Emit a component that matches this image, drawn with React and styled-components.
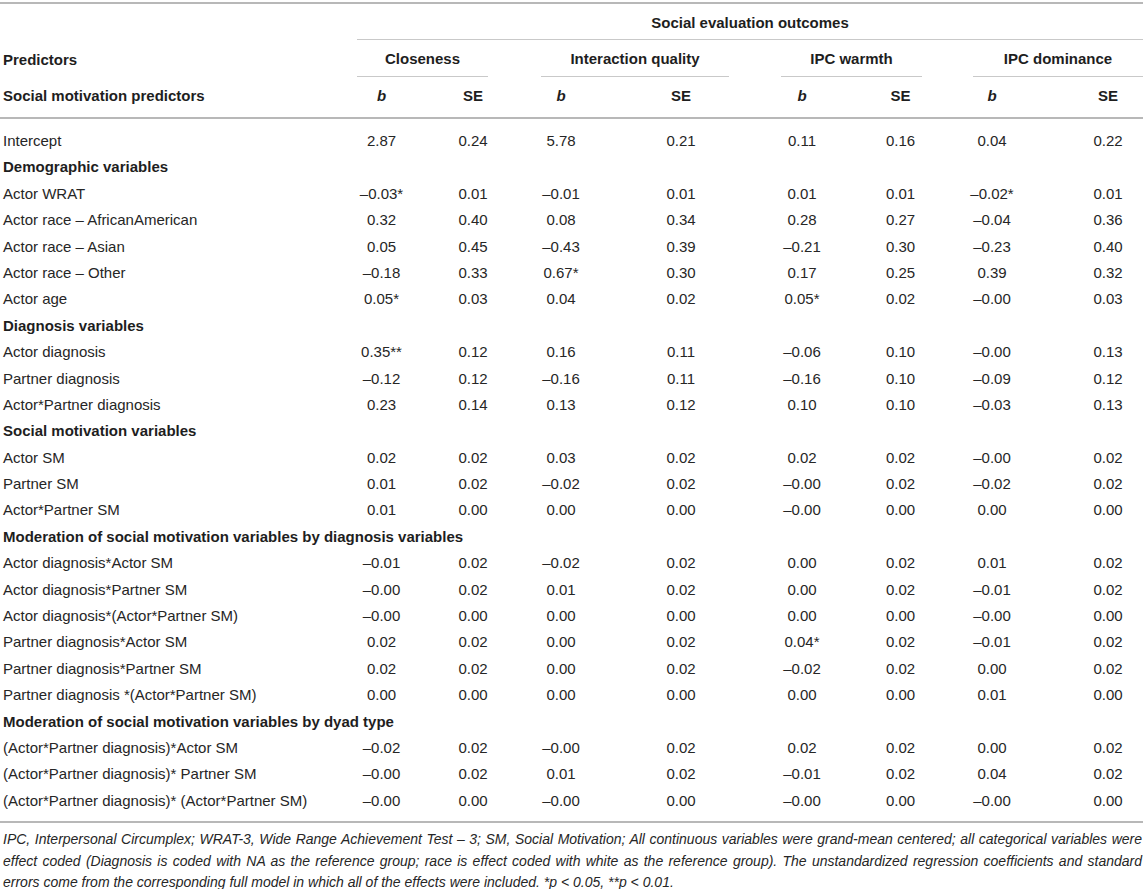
import React from "react";
import styled, { createGlobalStyle } from "styled-components";

const TRACKS =
  "357px 49px 52px 30px 53px 40px 52px 96px 52px 42px 56px 43px 51px 38px 62px 70px";

// grid lines for each outcome group (b column, SE column, line span)
const GROUPS = [
  { name: "Closeness", b: 2, se: 4, span: "2 / 5" },
  { name: "Interaction quality", b: 6, se: 8, span: "6 / 9" },
  { name: "IPC warmth", b: 10, se: 12, span: "10 / 13" },
  { name: "IPC dominance", b: 14, se: 16, span: "14 / 17" },
];

const D = "\u2013";

const BODY = [
  { label: "Intercept", v: ["2.87", "0.24", "5.78", "0.21", "0.11", "0.16", "0.04", "0.22"] },
  { section: "Demographic variables" },
  { label: "Actor WRAT", v: [D + "0.03*", "0.01", D + "0.01", "0.01", "0.01", "0.01", D + "0.02*", "0.01"] },
  { label: "Actor race " + D + " AfricanAmerican", v: ["0.32", "0.40", "0.08", "0.34", "0.28", "0.27", D + "0.04", "0.36"] },
  { label: "Actor race " + D + " Asian", v: ["0.05", "0.45", D + "0.43", "0.39", D + "0.21", "0.30", D + "0.23", "0.40"] },
  { label: "Actor race " + D + " Other", v: [D + "0.18", "0.33", "0.67*", "0.30", "0.17", "0.25", "0.39", "0.32"] },
  { label: "Actor age", v: ["0.05*", "0.03", "0.04", "0.02", "0.05*", "0.02", D + "0.00", "0.03"] },
  { section: "Diagnosis variables" },
  { label: "Actor diagnosis", v: ["0.35**", "0.12", "0.16", "0.11", D + "0.06", "0.10", D + "0.00", "0.13"] },
  { label: "Partner diagnosis", v: [D + "0.12", "0.12", D + "0.16", "0.11", D + "0.16", "0.10", D + "0.09", "0.12"] },
  { label: "Actor*Partner diagnosis", v: ["0.23", "0.14", "0.13", "0.12", "0.10", "0.10", D + "0.03", "0.13"] },
  { section: "Social motivation variables" },
  { label: "Actor SM", v: ["0.02", "0.02", "0.03", "0.02", "0.02", "0.02", D + "0.00", "0.02"] },
  { label: "Partner SM", v: ["0.01", "0.02", D + "0.02", "0.02", D + "0.00", "0.02", D + "0.02", "0.02"] },
  { label: "Actor*Partner SM", v: ["0.01", "0.00", "0.00", "0.00", D + "0.00", "0.00", "0.00", "0.00"] },
  { section: "Moderation of social motivation variables by diagnosis variables" },
  { label: "Actor diagnosis*Actor SM", v: [D + "0.01", "0.02", D + "0.02", "0.02", "0.00", "0.02", "0.01", "0.02"] },
  { label: "Actor diagnosis*Partner SM", v: [D + "0.00", "0.02", "0.01", "0.02", "0.00", "0.02", D + "0.01", "0.02"] },
  { label: "Actor diagnosis*(Actor*Partner SM)", v: [D + "0.00", "0.00", "0.00", "0.00", "0.00", "0.00", D + "0.00", "0.00"] },
  { label: "Partner diagnosis*Actor SM", v: ["0.02", "0.02", "0.00", "0.02", "0.04*", "0.02", D + "0.01", "0.02"] },
  { label: "Partner diagnosis*Partner SM", v: ["0.02", "0.02", "0.00", "0.02", D + "0.02", "0.02", "0.00", "0.02"] },
  { label: "Partner diagnosis *(Actor*Partner SM)", v: ["0.00", "0.00", "0.00", "0.00", "0.00", "0.00", "0.01", "0.00"] },
  { section: "Moderation of social motivation variables by dyad type" },
  { label: "(Actor*Partner diagnosis)*Actor SM", v: [D + "0.02", "0.02", D + "0.00", "0.02", "0.02", "0.02", "0.00", "0.02"] },
  { label: "(Actor*Partner diagnosis)* Partner SM", v: [D + "0.00", "0.02", "0.01", "0.02", D + "0.01", "0.02", "0.04", "0.02"] },
  { label: "(Actor*Partner diagnosis)* (Actor*Partner SM)", v: [D + "0.00", "0.00", D + "0.00", "0.00", D + "0.00", "0.00", D + "0.00", "0.00"] },
];

const DATA_COLS = GROUPS.flatMap((g) => [g.b, g.se]);

function App() {
  return (
    <>
      <GlobalStyle />
      <Page>
        <Table>
          <HeadRow $h={36} $pb={8}>
            <Spanning $span="2 / 17">Social evaluation outcomes</Spanning>
          </HeadRow>
          <HeadRow $h={37} $pb={9}>
            <HeadLabel>Predictors</HeadLabel>
            {GROUPS.map((g) => (
              <Spanning key={g.name} $span={g.span}>
                {g.name}
              </Spanning>
            ))}
          </HeadRow>
          <HeadRow $h={42} $pb={13} $rule>
            <HeadLabel>Social motivation predictors</HeadLabel>
            {GROUPS.map((g) => (
              <React.Fragment key={g.name}>
                <SubHead $col={g.b}>
                  <i>b</i>
                </SubHead>
                <SubHead $col={g.se}>SE</SubHead>
              </React.Fragment>
            ))}
          </HeadRow>
          <Body>
            {BODY.map((row, i) =>
              row.section ? (
                <Row key={i}>
                  <Section>{row.section}</Section>
                </Row>
              ) : (
                <Row key={i}>
                  <Label>{row.label}</Label>
                  {row.v.map((val, j) => (
                    <Num key={j} $col={DATA_COLS[j]}>
                      {val}
                    </Num>
                  ))}
                </Row>
              )
            )}
          </Body>
        </Table>
        <Footnote>
          IPC, Interpersonal Circumplex; WRAT-3, Wide Range Achievement Test {D} 3; SM,
          Social Motivation; All continuous variables were grand-mean centered; all
          categorical variables were effect coded (Diagnosis is coded with NA as the
          reference group; race is effect coded with white as the reference group). The
          unstandardized regression coefficients and standard errors come from the
          corresponding full model in which all of the effects were included. *p &lt; 0.05,
          **p &lt; 0.01.
        </Footnote>
      </Page>
    </>
  );
}

export default App;

const GlobalStyle = createGlobalStyle`
  html, body {
    margin: 0;
    padding: 0;
    background: #ffffff;
  }
  body {
    font-family: "Liberation Sans", Arial, Helvetica, sans-serif;
    color: #262626;
  }
`;

const Page = styled.div`
  width: 1143px;
  padding-top: 2px;
`;

const Table = styled.div`
  border-top: 2px solid #b8b8b8;
  border-bottom: 2px solid #b8b8b8;
`;

const HeadRow = styled.div`
  --pb: ${(p) => p.$pb}px;
  display: grid;
  grid-template-columns: ${TRACKS};
  height: ${(p) => p.$h}px;
  box-sizing: border-box;
  font-size: 15px;
  font-weight: bold;
  line-height: 17px;
  color: #1e1e1e;
  border-bottom: ${(p) => (p.$rule ? "2px solid #b8b8b8" : "none")};
`;

const HeadCell = styled.div`
  display: flex;
  align-items: flex-end;
  padding-bottom: var(--pb);
  white-space: nowrap;
`;

const Spanning = styled(HeadCell)`
  grid-column: ${(p) => p.$span};
  justify-content: center;
  border-bottom: 1px solid #c9c9c9;
`;

const HeadLabel = styled(HeadCell)`
  grid-column: 1;
  padding-left: 3px;
`;

const SubHead = styled(HeadCell)`
  grid-column: ${(p) => p.$col};
  justify-content: center;
`;

const Body = styled.div`
  padding: 9px 0 7px;
`;

const Row = styled.div`
  display: grid;
  grid-template-columns: ${TRACKS};
  height: 26.4px;
  line-height: 26.4px;
  font-size: 15px;
`;

const Label = styled.div`
  grid-column: 1;
  padding-left: 3px;
  white-space: nowrap;
`;

const Section = styled.div`
  grid-column: 1 / -1;
  padding-left: 3px;
  font-weight: bold;
  color: #1e1e1e;
  white-space: nowrap;
`;

const Num = styled.div`
  grid-column: ${(p) => p.$col};
  display: flex;
  justify-content: center;
  white-space: nowrap;
`;

const Footnote = styled.p`
  margin: 6px 0 0;
  padding: 0 1px 0 3px;
  font-size: 14px;
  line-height: 21.5px;
  font-style: italic;
  text-align: justify;
  color: #262626;
`;
